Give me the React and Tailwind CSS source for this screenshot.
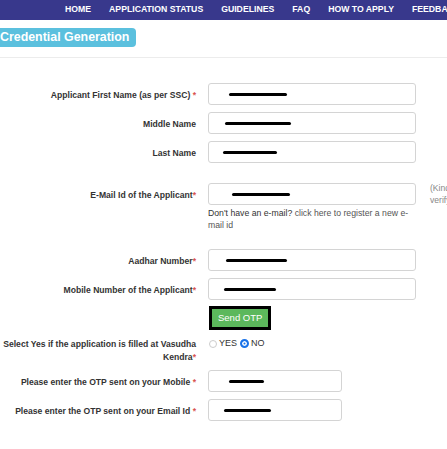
import React from 'react';

const navItems = ['HOME', 'APPLICATION STATUS', 'GUIDELINES', 'FAQ', 'HOW TO APPLY', 'FEEDBACK'];

const Req = () => <span className="text-[#d9534f]">*</span>;

const Field = ({ label, line, width = 'w-[208px]', mark = 'w-[58px]', markLeft = 'ml-[20px]', children }) => (
  <div className="flex items-start">
    <label className="w-[196px] shrink-0 text-right pt-[6px] font-bold leading-[12px]">{label}</label>
    <div className="ml-[12px]">
      <div className={`${width} h-[22px] border border-[#d4d4d4] rounded-[3px] bg-white flex items-center`}>
        {line && <div className={`${markLeft} ${mark} h-[3px] bg-black rounded-full`} />}
      </div>
      {children}
    </div>
  </div>
);

export default function App() {
  return (
    <div className="w-[447px] h-[449px] overflow-hidden bg-white text-[#333] text-[8.6px]" style={{ fontFamily: '"Liberation Sans", Arial, sans-serif' }}>
      <nav className="h-[20px] bg-[#38388c] flex items-center pl-[65px] gap-[18px] whitespace-nowrap">
        {navItems.map((item) => (
          <span key={item} className="text-white font-bold text-[8.7px]">{item}</span>
        ))}
      </nav>

      <div className="pt-[8px] pb-[10px] border-b border-[#ececec]">
        <div className="inline-block bg-[#5bc0de] text-white font-bold text-[12.4px] leading-[19px] pr-[7px] rounded-r-[4px] ml-[-4px] pl-[4px]">
          Credential Generation
        </div>
      </div>

      <div className="pt-[25px] flex flex-col">
        <Field label={<>Applicant First Name (as per SSC) <Req /></>} line mark="w-[58px]" markLeft="ml-[20px]" />
        <div className="h-[7px]" />
        <Field label="Middle Name" line mark="w-[66px]" markLeft="ml-[16px]" />
        <div className="h-[7px]" />
        <Field label="Last Name" line mark="w-[54px]" markLeft="ml-[14px]" />

        <div className="h-[20px]" />
        <div className="relative">
          <Field label={<>E-Mail Id of the Applicant<Req /></>} line mark="w-[58px]" markLeft="ml-[23px]">
            <p className="mt-[2px] w-[207px] leading-[12px] text-[8.7px]">
              Don't have an e-mail? <span className="text-[#555]">click here to register a new e-mail id</span>
            </p>
          </Field>
          <div className="absolute left-[430px] top-[-1px] text-[#888] leading-[12px] whitespace-nowrap">
            (Kindly<br />verify
          </div>
        </div>

        <div className="h-[18px]" />
        <Field label={<>Aadhar Number<Req /></>} line mark="w-[61px]" markLeft="ml-[17px]" />
        <div className="h-[7px]" />
        <Field label={<>Mobile Number of the Applicant<Req /></>} line mark="w-[52px]" markLeft="ml-[15px]" />

        <div className="flex mt-[6px]">
          <div className="w-[196px] shrink-0" />
          <button className="ml-[13px] bg-[#5cb85c] text-white text-[9.5px] px-[6px] h-[24px] border-[3px] border-black">
            Send OTP
          </button>
        </div>

        <div className="flex items-start mt-[6px]">
          <label className="w-[196px] shrink-0 text-right font-bold leading-[13px] pt-[2px]">
            Select Yes if the application is filled at Vasudha Kendra<Req />
          </label>
          <div className="ml-[13px] flex items-center gap-[2px] text-[9px] mt-[1px]">
            <span className="w-[8px] h-[8px] rounded-full border border-[#ccc] inline-block" />
            <span>YES</span>
            <span className="w-[9px] h-[9px] rounded-full border-[2px] border-[#1a73e8] bg-[#1a73e8] inline-block ml-[1px]" style={{ boxShadow: 'inset 0 0 0 1.5px white' }} />
            <span>NO</span>
          </div>
        </div>

        <div className="h-[6px]" />
        <Field label={<>Please enter the OTP sent on your Mobile <Req /></>} width="w-[134px]" line mark="w-[35px]" markLeft="ml-[20px]" />
        <div className="h-[7px]" />
        <Field label={<>Please enter the OTP sent on your Email Id <Req /></>} width="w-[134px]" line mark="w-[47px]" markLeft="ml-[15px]" />
      </div>
    </div>
  );
}
